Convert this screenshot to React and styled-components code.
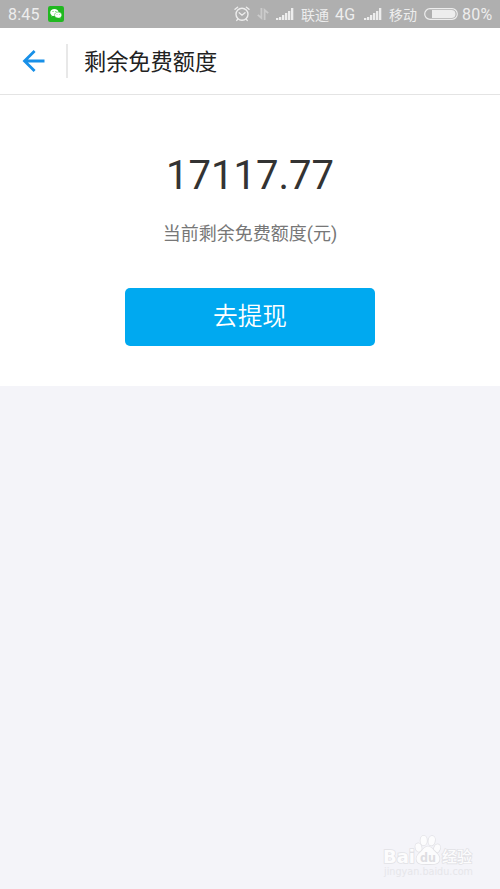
import React from "react";
import styled, { createGlobalStyle } from "styled-components";

const GlobalStyle = createGlobalStyle`
  * {
    box-sizing: border-box;
  }
  body {
    margin: 0;
    background: #f4f4f9;
    font-family: Roboto, "Noto Sans CJK SC", sans-serif;
  }
`;

const Screen = styled.div`
  position: relative;
  width: 500px;
  height: 889px;
  overflow: hidden;
  background: #f4f4f9;
`;

const StatusBar = styled.div`
  display: flex;
  align-items: center;
  height: 28px;
  padding: 0 8px;
  background: #afafaf;
  color: #ededed;

  svg {
    display: block;
    flex: none;
  }
`;

const StatusText = styled.span`
  flex: none;
  width: ${({ $width }) => $width}px;
  margin-left: ${({ $gap }) => $gap || 0}px;
  padding-top: 1px;
  font-size: ${({ $size }) => $size || 16}px;
  line-height: 28px;
  letter-spacing: ${({ $size }) => ($size ? 0 : 0.2)}px;
  white-space: nowrap;
`;

const StatusIcon = styled.span`
  flex: none;
  margin-left: ${({ $gap }) => $gap || 0}px;
`;

const Header = styled.header`
  display: flex;
  align-items: center;
  height: 67px;
  border-bottom: 1px solid #e4e4e4;
  background: #fff;
`;

const BackButton = styled.button`
  display: flex;
  align-items: center;
  width: 68px;
  height: 34px;
  padding: 0 0 0 22px;
  border: 0;
  border-right: 2px solid #e8e8e8;
  background: none;
`;

const Title = styled.h1`
  margin: 0 0 0 16px;
  padding-top: 2px;
  color: #222;
  font-size: 22.2px;
  font-weight: 400;
  line-height: 32px;
`;

const Quota = styled.main`
  display: flex;
  flex-direction: column;
  align-items: center;
  height: 291px;
  padding-top: 57px;
  background: #fff;
`;

const Amount = styled.div`
  color: #333;
  font-size: 40px;
  line-height: 48px;
`;

const Caption = styled.div`
  margin-top: 21px;
  color: #777;
  font-size: 18px;
  line-height: 26px;
`;

const Withdraw = styled.button`
  width: 250px;
  height: 58px;
  margin-top: 41px;
  padding: 0 0 6px;
  border: 0;
  border-radius: 5px;
  background: #00a9f0;
  color: #fff;
  font-family: "Noto Sans CJK SC", sans-serif;
  font-size: 24.7px;
  font-weight: 350;
  line-height: 36px;
`;

const Watermark = styled.div`
  position: absolute;
  left: 382px;
  top: 834px;
  width: 100px;
  height: 50px;
`;

const WeChat = () => (
  <svg width="16" height="16" viewBox="0 0 16 16">
    <rect width="16" height="16" rx="2.2" fill="#20b820" />
    <path d="M6.400 3.100C4 3.100 2.200 4.600 2.200 6.500c0 1.100.6 2 1.600 2.700l-.4 1.300 1.500-.8c.5.100 1 .2 1.500.2 2.400 0 4.200-1.500 4.200-3.400S8.800 3.100 6.400 3.100z" fill="#fff" />
    <path d="M10.200 6.100c-2.100 0-3.700 1.300-3.700 3s1.600 3 3.700 3c.4 0 .8 0 1.200-.2l1.300.7-.3-1.200c.8-.6 1.400-1.400 1.400-2.300 0-1.700-1.600-3-3.600-3z" fill="#fff" stroke="#20b820" strokeWidth=".5" />
    <circle cx="5" cy="5.5" r=".5" fill="#20b820" />
    <circle cx="7.9" cy="5.5" r=".5" fill="#20b820" />
    <circle cx="9" cy="8.3" r=".4" fill="#20b820" />
    <circle cx="11.4" cy="8.3" r=".4" fill="#20b820" />
  </svg>
);

const Alarm = () => (
  <svg width="16" height="16" viewBox="0 0 16 16" fill="none" stroke="currentColor" strokeWidth="1.4" strokeLinecap="round">
    <circle cx="8" cy="8.3" r="6" />
    <path d="M1 3.300 3.600 1.200M15 3.300 12.400 1.200M5.200 6.800 8 9.200l3-2.400M3.600 13.400l-.8 1M12.400 13.400l.8 1" />
  </svg>
);

const DataArrows = () => (
  <svg width="12" height="12" viewBox="0 0 12 12" fill="none" stroke="#cbcbcb" strokeWidth="1.8">
    <path d="M4.400 0v10L.8 6.800M7.600 12V2l3.600 3.200" />
  </svg>
);

const bars = [2, 3, 5, 7, 9, 12];

const Signal = () => (
  <svg width="18" height="12" viewBox="0 0 18 12" fill="currentColor">
    {bars.map((h, i) => (
      <rect key={h} x={i * 3} y={12 - h} width="2.3" height={h} />
    ))}
  </svg>
);

const Battery = () => (
  <svg width="34" height="12" viewBox="0 0 34 12">
    <rect x=".7" y=".7" width="32.6" height="10.6" rx="5.3" fill="none" stroke="#ededed" strokeWidth="1.2" />
    <path d="M8 2h19.500a4 4 0 0 1 0 8H8z" fill="#ededed" />
  </svg>
);

const BackArrow = () => (
  <svg width="24" height="24" viewBox="0 0 24 24" fill="none" stroke="#1890e8" strokeWidth="2.8">
    <path d="M22.500 12H3M12.600 1.900 2.500 12l10.100 10.100" />
  </svg>
);

const BaiduMark = () => (
  <svg width="100" height="50" viewBox="0 0 100 50" fill="#fcfcfd" stroke="#e2e2e6" strokeWidth="1.6" paintOrder="stroke" fontFamily='"DejaVu Sans", "Noto Sans CJK SC", sans-serif'>
    <text x="1" y="29" fontSize="18.5" fontWeight="700" textLength="32" lengthAdjust="spacingAndGlyphs">Bai</text>
    <ellipse cx="36.5" cy="13.5" rx="3" ry="4.2" transform="rotate(-15 36.5 13.5)" />
    <ellipse cx="41.7" cy="6.5" rx="3.2" ry="4.7" />
    <ellipse cx="49.7" cy="6.7" rx="3.2" ry="4.7" transform="rotate(10 49.7 6.7)" />
    <ellipse cx="55" cy="14.5" rx="3" ry="4.2" transform="rotate(20 55 14.5)" />
    <path d="M46 12.500c-3 0-4.500 2.700-6.500 4.700-2.200 2.100-5.500 4.500-4.900 8.400.7 5.100 5.700 4.500 11.400 4.500s10.700.6 11.400-4.500c.5-3.900-2.700-6.300-4.900-8.400C50.500 15.200 49 12.500 46 12.500z" />
    <text x="38" y="28" fontSize="13" fontWeight="700" fill="#dedee2" stroke="none" textLength="16" lengthAdjust="spacingAndGlyphs">du</text>
    <text x="60" y="28" fontSize="15" fontWeight="500" textLength="30">经验</text>
    <text x="2" y="41" fontSize="10.5" fill="#e6e6ea" stroke="none" textLength="89" lengthAdjust="spacingAndGlyphs">jingyan.baidu.com</text>
  </svg>
);

function App() {
  return (
    <Screen>
      <GlobalStyle />
      <StatusBar>
        <StatusText $width={32}>8:45</StatusText>
        <StatusIcon $gap={8}><WeChat /></StatusIcon>
        <StatusIcon $gap={170}><Alarm /></StatusIcon>
        <StatusIcon $gap={7}><DataArrows /></StatusIcon>
        <StatusIcon $gap={7}><Signal /></StatusIcon>
        <StatusText $width={28} $gap={7} $size={14}>联通</StatusText>
        <StatusText $width={22} $gap={6}>4G</StatusText>
        <StatusIcon $gap={7}><Signal /></StatusIcon>
        <StatusText $width={28} $gap={7} $size={14}>移动</StatusText>
        <StatusIcon $gap={7}><Battery /></StatusIcon>
        <StatusText $width={30} $gap={4}>80%</StatusText>
      </StatusBar>
      <Header>
        <BackButton aria-label="返回"><BackArrow /></BackButton>
        <Title>剩余免费额度</Title>
      </Header>
      <Quota>
        <Amount>17117.77</Amount>
        <Caption>当前剩余免费额度(元)</Caption>
        <Withdraw>去提现</Withdraw>
      </Quota>
      <Watermark>
        <BaiduMark />
      </Watermark>
    </Screen>
  );
}

export default App;
